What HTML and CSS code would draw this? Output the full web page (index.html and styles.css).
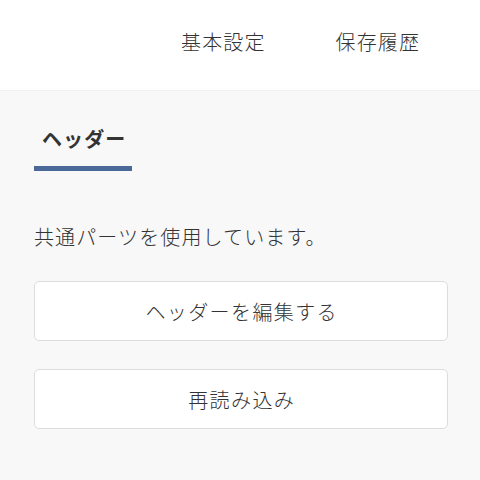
FILE: index.html
```html
<!DOCTYPE html>
<html lang="ja">
<head>
<meta charset="utf-8">
<link rel="stylesheet" href="styles.css">
</head>
<body>
<header class="topbar">
  <nav class="nav">
    <a class="nav-item">基本設定</a>
    <a class="nav-item">保存履歴</a>
  </nav>
</header>
<main class="content">
  <div class="tabs">
    <div class="tab active">ヘッダー</div>
  </div>
  <p class="note">共通パーツを使用しています。</p>
  <div class="actions">
    <button class="btn">ヘッダーを編集する</button>
    <button class="btn">再読み込み</button>
  </div>
</main>
</body>
</html>
```

FILE: styles.css
```css
* { box-sizing: border-box; }
html, body {
  margin: 0;
  padding: 0;
  height: 100%;
}
body {
  background: #f8f8f8;
  color: #333;
  font-family: "Noto Sans CJK JP", "Noto Sans", sans-serif;
  font-weight: 300;
  letter-spacing: 0.07em;
}
.topbar {
  height: 91px;
  background: #fff;
  border-bottom: 1px solid #f0f0f0;
  display: flex;
  align-items: center;
  justify-content: flex-end;
  padding-right: 60px;
}
.nav {
  display: flex;
  gap: 70px;
  margin-top: -8px;
}
.nav-item {
  font-size: 20px;
  color: #333;
}
.content {
  padding: 28px 32px 0 34px;
}
.tabs {
  display: flex;
}
.tab {
  padding: 0 6px 0 8px;
  font-size: 20px;
  font-weight: bold;
  line-height: 40px;
  height: 52px;
  border-bottom: 5px solid #4a6998;
  color: #333;
}
.note {
  margin: 51px 0 0 0;
  font-size: 20px;
  line-height: 30px;
}
.actions {
  margin-top: 29px;
  display: flex;
  flex-direction: column;
  gap: 28px;
}
.btn {
  height: 60px;
  width: 100%;
  background: #fff;
  border: 1px solid #ddd;
  border-radius: 5px;
  font-family: inherit;
  font-size: 20px;
  font-weight: 300;
  letter-spacing: 0.07em;
  color: #333;
  padding: 0 0 0 0.07em;
}
```
